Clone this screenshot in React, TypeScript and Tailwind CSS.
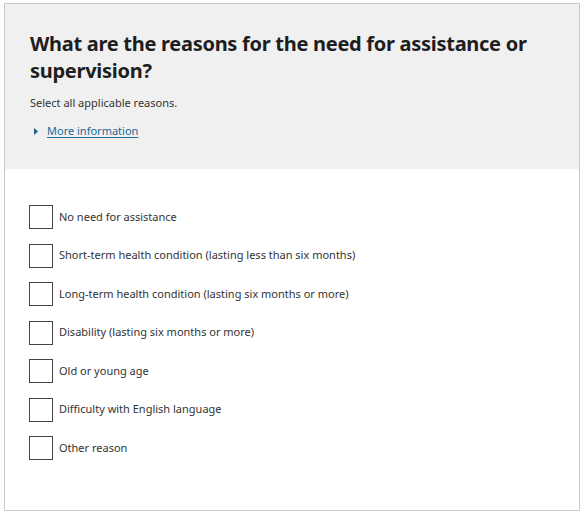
import React from "react";

const options = [
  "No need for assistance",
  "Short-term health condition (lasting less than six months)",
  "Long-term health condition (lasting six months or more)",
  "Disability (lasting six months or more)",
  "Old or young age",
  "Difficulty with English language",
  "Other reason",
];

export default function App() {
  return (
    <div
      className="w-[588px] h-[517px] bg-white pl-[4px] pt-[3px]"
      style={{ fontFamily: '"Noto Sans", "Open Sans", sans-serif' }}
    >
      <div className="w-[576px] h-[508px] border border-[#c8c8c8] flex flex-col">
        <div className="bg-[#f0f0f0] h-[165px] pl-[25px] pt-[26px]">
          <h1 className="text-[20px] leading-[27px] font-bold text-[#1e1e1e] w-[510px] tracking-[-0.28px]">
            What are the reasons for the need for assistance or supervision?
          </h1>
          <p className="mt-[11px] text-[11px] leading-[16px] text-[#333]">
            Select all applicable reasons.
          </p>
          <div className="mt-[12px] flex items-center gap-[9px] pl-[4px]">
            <svg width="4" height="7" viewBox="0 0 4 7">
              <path d="M0 0 L4 3.5 L0 7 Z" fill="#1a5f8c" />
            </svg>
            <a className="text-[11px] leading-[16px] text-[#1b6a9a] underline underline-offset-2">
              More information
            </a>
          </div>
        </div>
        <div className="pl-[24px] pt-[36px] flex flex-col gap-[14.5px]">
          {options.map((o) => (
            <label key={o} className="flex items-center gap-[6px] h-[24px]">
              <span className="w-[24px] h-[24px] border border-[#444] bg-white shrink-0" />
              <span className="text-[11px] text-[#333]">{o}</span>
            </label>
          ))}
        </div>
      </div>
    </div>
  );
}
